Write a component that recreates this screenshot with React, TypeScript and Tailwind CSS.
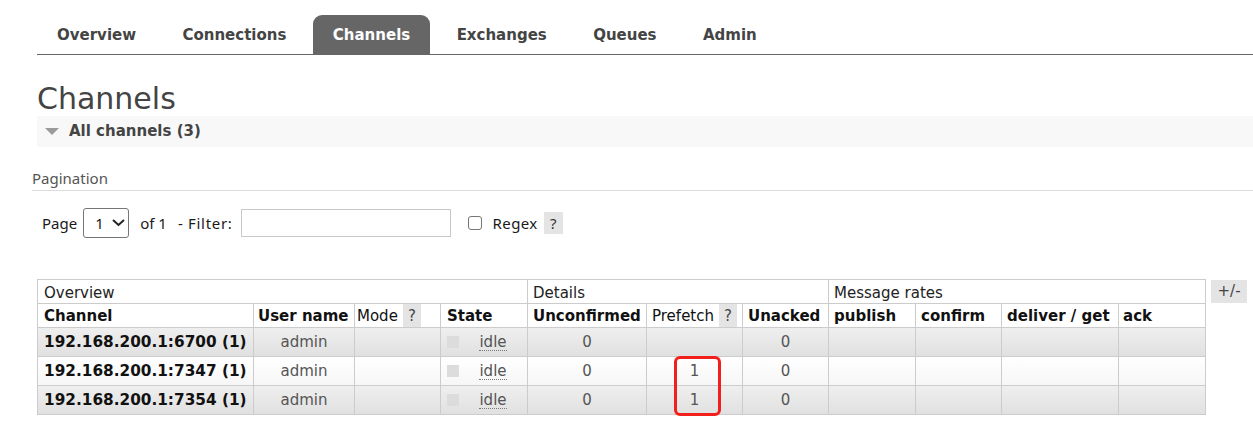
import React from "react";

const tabs = ["Overview", "Connections", "Channels", "Exchanges", "Queues", "Admin"];

const rows = [
  { name: "192.168.200.1:6700 (1)", prefetch: "", alt: true },
  { name: "192.168.200.1:7347 (1)", prefetch: "1", alt: false },
  { name: "192.168.200.1:7354 (1)", prefetch: "1", alt: true },
];

function Help() {
  return (
    <span className="inline-flex items-center justify-center w-[18px] h-[23px] bg-[#e4e4e4] text-[#444] font-normal">?</span>
  );
}

export default function App() {
  return (
    <div className="w-[1253px] h-[422px] bg-white overflow-hidden font-['DejaVu_Sans',sans-serif]">
      {/* Tabs */}
      <div className="pt-[15px] pl-[37px]">
        <div className="flex border-b border-[#666] text-[15px] font-bold">
          {tabs.map((t) => (
            <div
              key={t}
              className={
                t === "Channels"
                  ? "h-[39px] pt-[2px] px-5 mr-[6.4px] flex items-center bg-[#666] text-white rounded-t-[9px]"
                  : "h-[39px] pt-[2px] px-5 mr-[6.4px] flex items-center text-[#444]"
              }
            >
              {t}
            </div>
          ))}
        </div>
      </div>

      {/* Title */}
      <h1 className="ml-[37px] mt-[26px] text-[30px] leading-[35px] text-[#444] font-normal">Channels</h1>

      {/* Section bar */}
      <div className="ml-[37px] h-[31px] bg-[#f8f8f8] flex items-center">
        <svg width="14" height="8" viewBox="0 0 14 8" className="ml-[8px]">
          <polygon points="0,0 14,0 7,7" fill="#9a9a9a" />
        </svg>
        <span className="ml-[10px] text-[15px] font-bold text-[#444]">All channels (3)</span>
      </div>

      {/* Pagination */}
      <div className="ml-[32px] mt-[21px] pb-[2px] border-b border-[#ddd] font-['Noto_Sans',sans-serif] text-[15px] leading-[20px] text-[#555]">
        Pagination
      </div>

      <div className="ml-[42px] mt-[17px] h-[30px] flex items-center font-['Noto_Sans',sans-serif] text-[15px] text-[#1a1a1a]">
        <span>Page</span>
        <div className="ml-[6px] w-[46px] h-[30px] border border-[#767676] rounded-[3px] flex items-center">
          <span className="ml-[11px]">1</span>
          <svg width="13" height="8" viewBox="0 0 13 8" className="ml-[8px]">
            <polyline points="1,1 6.5,6 12,1" fill="none" stroke="#222" strokeWidth="2" />
          </svg>
        </div>
        <span className="ml-[11px]">of 1</span>
        <span className="ml-[11px] tracking-[0.7px]">- Filter:</span>
        <div className="ml-[8px] w-[210px] h-[28px] border border-[#c8c8c8]" />
        <div className="ml-[17px] w-[14px] h-[14px] border border-[#767676] rounded-[3px]" />
        <span className="ml-[11px] tracking-[0.4px]">Regex</span>
        <span className="ml-[6px] w-[19px] h-[22px] bg-[#e4e4e4] flex items-center justify-center text-[#333]">?</span>
      </div>

      {/* Table */}
      <div className="ml-[37px] mt-[41px] flex items-start">
        <div className="relative">
          <table className="table-fixed border-collapse text-[15px] leading-[20px] w-[1168px]">
            <colgroup>
              <col className="w-[216px]" />
              <col className="w-[101px]" />
              <col className="w-[86px]" />
              <col className="w-[87px]" />
              <col className="w-[119px]" />
              <col className="w-[96px]" />
              <col className="w-[86px]" />
              <col className="w-[87px]" />
              <col className="w-[86px]" />
              <col className="w-[117px]" />
              <col className="w-[87px]" />
            </colgroup>
            <thead>
              <tr className="h-[24px]">
                <th colSpan={4} className="border border-[#ccc] text-left font-normal text-[#222] px-[6px] pt-[2px] pb-0">Overview</th>
                <th colSpan={3} className="border border-[#ccc] text-left font-normal text-[#222] px-[5px] pt-[2px] pb-0">Details</th>
                <th colSpan={4} className="border border-[#ccc] text-left font-normal text-[#222] px-[5px] pt-[2px] pb-0">Message rates</th>
              </tr>
              <tr className="h-[24px] text-[#111]">
                <th className="border border-[#ccc] text-left font-bold px-[6px] py-0">Channel</th>
                <th className="border border-[#ccc] text-left font-bold px-[4px] py-0 whitespace-nowrap">User name</th>
                <th className="border border-[#ccc] text-left font-normal pl-[2px] py-0">
                  <div className="flex items-center">
                    <span>Mode</span>
                    <span className="ml-[5px]"><Help /></span>
                  </div>
                </th>
                <th className="border border-[#ccc] text-left font-bold px-[6px] py-0">State</th>
                <th className="border border-[#ccc] text-left font-bold px-[5px] py-0 whitespace-nowrap">Unconfirmed</th>
                <th className="border border-[#ccc] text-left font-normal pl-[5px] py-0">
                  <div className="flex items-center">
                    <span>Prefetch</span>
                    <span className="ml-[5px]"><Help /></span>
                  </div>
                </th>
                <th className="border border-[#ccc] text-left font-bold px-[5px] py-0">Unacked</th>
                <th className="border border-[#ccc] text-left font-bold px-[5px] py-0">publish</th>
                <th className="border border-[#ccc] text-left font-bold px-[5px] py-0">confirm</th>
                <th className="border border-[#ccc] text-left font-bold px-[5px] py-0 whitespace-nowrap">deliver / get</th>
                <th className="border border-[#ccc] text-left font-bold px-[4px] py-0">ack</th>
              </tr>
            </thead>
            <tbody>
              {rows.map((r) => (
                <tr
                  key={r.name}
                  className={
                    r.alt
                      ? "h-[29px] bg-gradient-to-b from-[#efefef] to-[#e0e0e0]"
                      : "h-[29px] bg-gradient-to-b from-[#ffffff] to-[#f6f6f6]"
                  }
                >
                  <td className="border border-[#ccc] px-[6px] py-0 font-bold text-[15.3px] text-[#111] whitespace-nowrap">{r.name}</td>
                  <td className="border border-[#ccc] py-0 text-center text-[#555]">admin</td>
                  <td className="border border-[#ccc] py-0"></td>
                  <td className="border border-[#ccc] py-0 pl-[6px] pr-[6px] text-[#555]">
                    <div className="flex items-center">
                      <span className="w-[12px] h-[12px] bg-[#dcdcdc] shrink-0" />
                      <span className="flex-1 ml-[6px] text-center">
                        <span className="border-b border-dotted border-[#777] leading-[16px] inline-block">idle</span>
                      </span>
                    </div>
                  </td>
                  <td className="border border-[#ccc] py-0 text-center text-[#555]">0</td>
                  <td className="border border-[#ccc] py-0 text-center text-[#555]">{r.prefetch}</td>
                  <td className="border border-[#ccc] py-0 text-center text-[#555]">0</td>
                  <td className="border border-[#ccc] py-0"></td>
                  <td className="border border-[#ccc] py-0"></td>
                  <td className="border border-[#ccc] py-0"></td>
                  <td className="border border-[#ccc] py-0"></td>
                </tr>
              ))}
            </tbody>
          </table>
          <div className="absolute left-[637px] top-[77px] w-[47px] h-[60px] border-[3px] border-[#f2201c] rounded-[6px]" />
        </div>
        <div className="ml-[5px] mt-[1px] w-[36px] h-[23px] bg-[#e4e4e4] flex items-center justify-center text-[15px] text-[#444]">
          +/-
        </div>
      </div>
    </div>
  );
}
